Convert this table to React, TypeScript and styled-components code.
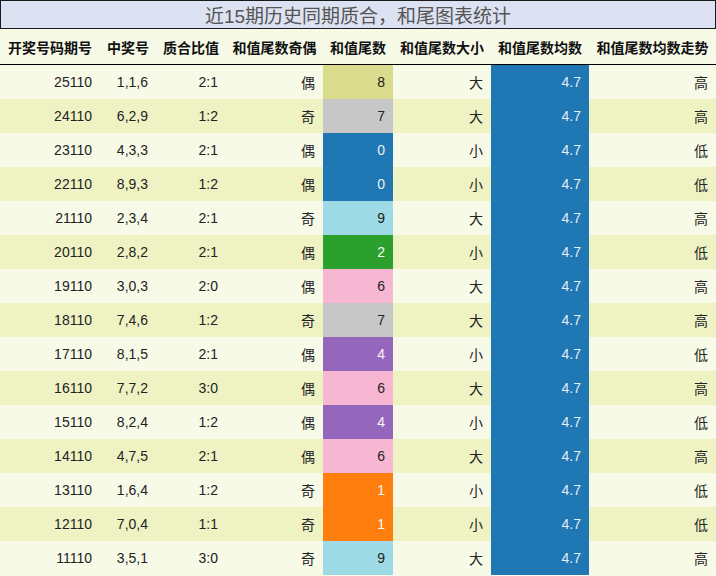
import React from "react";
import styled, { createGlobalStyle } from "styled-components";

const Global = createGlobalStyle`
  html, body { margin: 0; padding: 0; background: #f8fae8; }
  body { font-family: "Liberation Sans", "Noto Sans CJK SC", sans-serif; }
`;

const COLS = "100px 56px 70px 97px 70px 98px 98px 127px";

const Page = styled.div`
  width: 716px;
  display: flex;
  flex-direction: column;
  background: #f8fae8;
`;

const Title = styled.div`
  box-sizing: border-box;
  height: 29px;
  border: 1px solid #1a1a1a;
  background: #dde2f2;
  color: #555;
  font-size: 19px;
  display: flex;
  align-items: center;
  justify-content: center;
  font-family: "Liberation Sans", "Noto Sans CJK SC", sans-serif;
`;

const HeaderRow = styled.div`
  display: grid;
  grid-template-columns: ${COLS};
  height: 35px;
  border-bottom: 1px solid #000;
  background: #f8fae8;
`;

const HeadCell = styled.div`
  display: flex;
  align-items: center;
  justify-content: center;
  font-weight: bold;
  font-size: 14px;
  color: #111;
  white-space: nowrap;
`;

const Row = styled.div<{ $alt: boolean }>`
  display: grid;
  grid-template-columns: ${COLS};
  height: 34px;
  background: ${(p) => (p.$alt ? "#eff3c4" : "#f8fae8")};
`;

const Cell = styled.div<{ $bg?: string; $fg?: string }>`
  display: flex;
  align-items: center;
  justify-content: flex-end;
  padding-right: 8px;
  font-size: 14px;
  color: ${(p) => p.$fg || "#222"};
  background: ${(p) => p.$bg || "transparent"};
  white-space: nowrap;
`;

const tailColor: Record<number, [string, string]> = {
  0: ["#1f77b4", "#f0f0f0"],
  1: ["#ff7f0e", "#f8f8f8"],
  2: ["#2ca02c", "#f8f8f8"],
  4: ["#9467bd", "#f8f8f8"],
  6: ["#f7b6d2", "#222"],
  7: ["#c7c7c7", "#222"],
  8: ["#dbdb8d", "#222"],
  9: ["#9edae5", "#222"],
};

const rows: [string, string, string, string, number, string, string][] = [
  ["25110", "1,1,6", "2:1", "偶", 8, "大", "高"],
  ["24110", "6,2,9", "1:2", "奇", 7, "大", "高"],
  ["23110", "4,3,3", "2:1", "偶", 0, "小", "低"],
  ["22110", "8,9,3", "1:2", "偶", 0, "小", "低"],
  ["21110", "2,3,4", "2:1", "奇", 9, "大", "高"],
  ["20110", "2,8,2", "2:1", "偶", 2, "小", "低"],
  ["19110", "3,0,3", "2:0", "偶", 6, "大", "高"],
  ["18110", "7,4,6", "1:2", "奇", 7, "大", "高"],
  ["17110", "8,1,5", "2:1", "偶", 4, "小", "低"],
  ["16110", "7,7,2", "3:0", "偶", 6, "大", "高"],
  ["15110", "8,2,4", "1:2", "偶", 4, "小", "低"],
  ["14110", "4,7,5", "2:1", "偶", 6, "大", "高"],
  ["13110", "1,6,4", "1:2", "奇", 1, "小", "低"],
  ["12110", "7,0,4", "1:1", "奇", 1, "小", "低"],
  ["11110", "3,5,1", "3:0", "奇", 9, "大", "高"],
];

const headers = [
  "开奖号码期号",
  "中奖号",
  "质合比值",
  "和值尾数奇偶",
  "和值尾数",
  "和值尾数大小",
  "和值尾数均数",
  "和值尾数均数走势",
];

export default function App() {
  return (
    <Page>
      <Global />
      <Title>近15期历史同期质合，和尾图表统计</Title>
      <HeaderRow>
        {headers.map((h) => (
          <HeadCell key={h}>{h}</HeadCell>
        ))}
      </HeaderRow>
      {rows.map((r, i) => {
        const [bg, fg] = tailColor[r[4]];
        return (
          <Row key={r[0]} $alt={i % 2 === 1}>
            <Cell>{r[0]}</Cell>
            <Cell>{r[1]}</Cell>
            <Cell>{r[2]}</Cell>
            <Cell>{r[3]}</Cell>
            <Cell $bg={bg} $fg={fg}>{r[4]}</Cell>
            <Cell>{r[5]}</Cell>
            <Cell $bg="#1f77b4" $fg="#e6edf5">4.7</Cell>
            <Cell>{r[6]}</Cell>
          </Row>
        );
      })}
    </Page>
  );
}
